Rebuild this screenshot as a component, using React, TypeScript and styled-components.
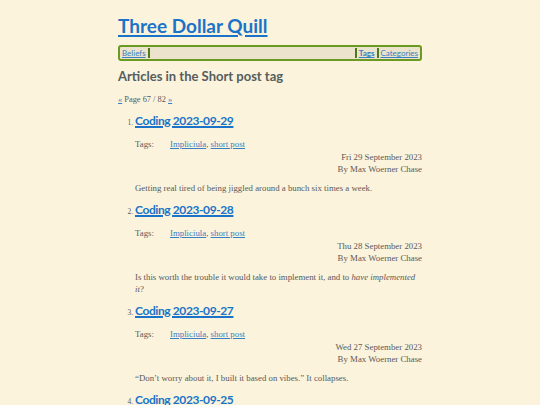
import React from "react";
import styled, { createGlobalStyle } from "styled-components";

const Global = createGlobalStyle`
  html, body { margin: 0; padding: 0; background: #fbf3dc; }
  body { font-family: "Liberation Serif", serif; color: #5a5a5a; }
`;

const Page = styled.div`
  width: 304px;
  margin: 0 auto;
  padding-top: 13px;
`;

const SiteTitle = styled.a`
  display: block;
  font-family: Lato, "Open Sans", sans-serif;
  font-weight: 700;
  font-size: 19px;
  line-height: 25px;
  color: #1a73c8;
  text-decoration: underline;
  text-decoration-thickness: 2px;
  text-underline-offset: 2px;
`;

const Nav = styled.nav`
  margin-top: 7px;
  display: flex;
  align-items: stretch;
  height: 12px;
  border: 2px solid #6b9a22;
  border-radius: 3px;
  background: #ebe3cc;
  padding: 0 1px;
  font-family: Lato, "Open Sans", sans-serif;
  font-size: 8px;
  line-height: 12px;
`;

const NavLink = styled.a<{ $bold?: boolean }>`
  color: #3a7fc2;
  font-weight: ${(p) => (p.$bold ? 700 : 400)};
  text-decoration: underline;
  padding: 0 1px;
`;

const Sep = styled.span`
  width: 2px;
  background: #4f7a18;
  margin: 1px 1px;
`;

const Spacer = styled.span`
  flex: 1;
`;

const PageHeading = styled.h1`
  margin: 6px 0 0;
  font-family: Lato, "Open Sans", sans-serif;
  font-weight: 700;
  font-size: 13px;
  line-height: 18px;
  color: #545e5e;
`;

const Pager = styled.div`
  margin-top: 9px;
  font-size: 8.4px;
  line-height: 12px;
  a { color: #3a7fc2; }
`;

const List = styled.ol`
  margin: 6px 0 0;
  padding-left: 17px;
`;

const Item = styled.li`
  font-size: 7.5px;
  margin-bottom: 7px;
`;

const ItemTitle = styled.a`
  font-family: Lato, "Open Sans", sans-serif;
  font-weight: 700;
  font-size: 12px;
  letter-spacing: -0.4px;
  line-height: 18px;
  color: #1a73c8;
  text-decoration: underline;
  text-decoration-thickness: 1.5px;
  text-underline-offset: 1px;
`;

const TagsRow = styled.div`
  display: flex;
  margin-top: 8px;
  font-size: 8.8px;
  line-height: 12px;
`;

const TagsLabel = styled.span`
  width: 35px;
`;

const TagLink = styled.a`
  color: #3a7fc2;
  text-decoration: underline;
`;

const MetaBlock = styled.div`
  margin-top: 1px;
  text-align: right;
  font-size: 8.8px;
  line-height: 12px;
`;

const Body = styled.p`
  margin: 7px 0 0;
  font-size: 8.8px;
  line-height: 12px;
`;

type Post = { title: string; date: string; body: React.ReactNode };

const posts: Post[] = [
  {
    title: "Coding 2023-09-29",
    date: "Fri 29 September 2023",
    body: "Getting real tired of being jiggled around a bunch six times a week.",
  },
  {
    title: "Coding 2023-09-28",
    date: "Thu 28 September 2023",
    body: (
      <>
        Is this worth the trouble it would take to implement it, and to <em>have implemented it</em>?
      </>
    ),
  },
  {
    title: "Coding 2023-09-27",
    date: "Wed 27 September 2023",
    body: "\u201cDon\u2019t worry about it, I built it based on vibes.\u201d It collapses.",
  },
  {
    title: "Coding 2023-09-25",
    date: "Mon 25 September 2023",
    body: "More work.",
  },
];

export default function App() {
  return (
    <>
      <Global />
      <Page>
        <SiteTitle href="#">Three Dollar Quill</SiteTitle>
        <Nav>
          <NavLink href="#">Beliefs</NavLink>
          <Sep />
          <Spacer />
          <Sep />
          <NavLink href="#" $bold>Tags</NavLink>
          <Sep />
          <NavLink href="#">Categories</NavLink>
        </Nav>
        <PageHeading>Articles in the Short post tag</PageHeading>
        <Pager>
          <a href="#">«</a> Page 67 / 82 <a href="#">»</a>
        </Pager>
        <List>
          {posts.map((p) => (
            <Item key={p.title}>
              <ItemTitle href="#">{p.title}</ItemTitle>
              <TagsRow>
                <TagsLabel>Tags:</TagsLabel>
                <span>
                  <TagLink href="#">Impliciula</TagLink>, <TagLink href="#">short post</TagLink>
                </span>
              </TagsRow>
              <MetaBlock>
                {p.date}
                <br />
                By Max Woerner Chase
              </MetaBlock>
              <Body>{p.body}</Body>
            </Item>
          ))}
        </List>
      </Page>
    </>
  );
}
